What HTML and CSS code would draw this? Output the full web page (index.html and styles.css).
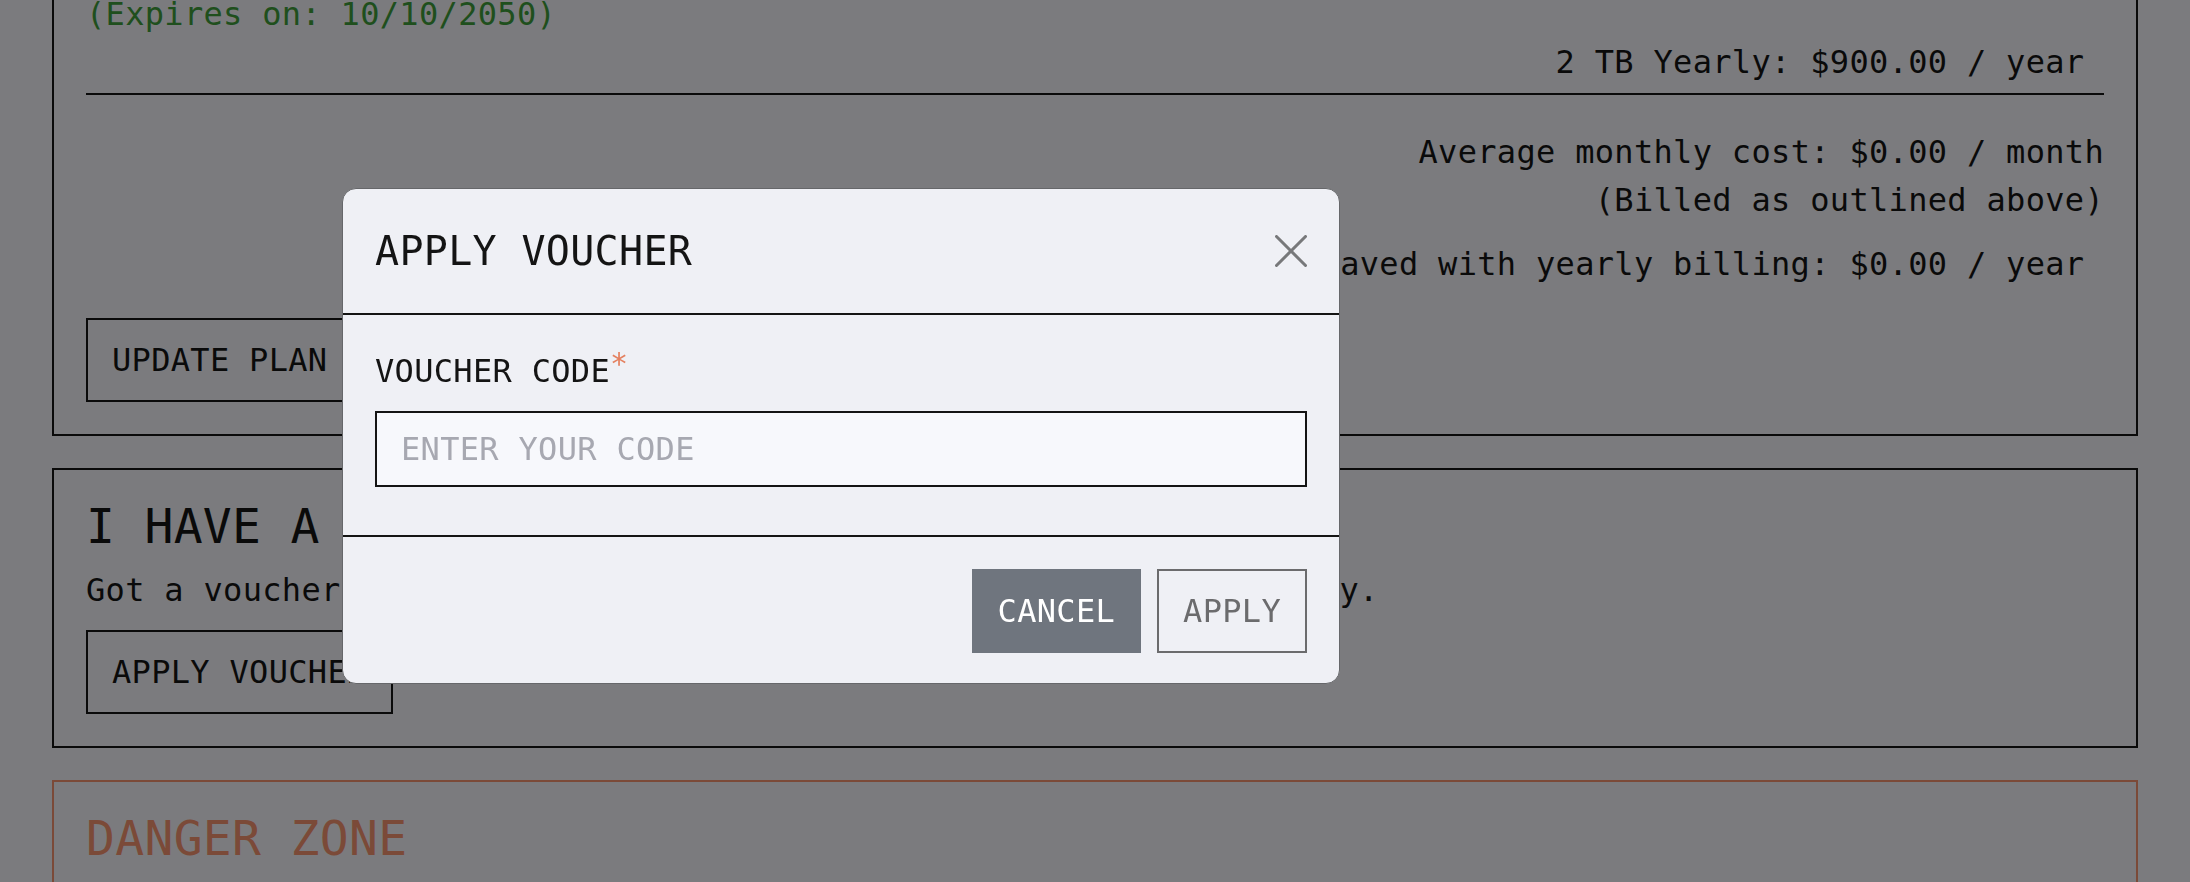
FILE: index.html
```html
<!DOCTYPE html>
<html>
<head>
  <meta charset="utf-8">
  <title>Billing</title>
  <link rel="stylesheet" href="styles.css">
</head>
<body>
 <main class="page">

  <!-- current plan -->
  <section class="card">
   <h2 class="card-title">CURRENT PLAN</h2>
   <ul class="line-items">
    <li class="line-item">
     <div class="item-label">
      <span>VOUCHER: FOREVER2050</span>
      <span class="expires">(Expires on: 10/10/2050)</span>
     </div>
     <span class="item-price">-$900.00 / year&nbsp;</span>
    </li>
    <li class="line-item">
     <span></span>
     <span class="item-price">2 TB Yearly: $900.00 / year&nbsp;</span>
    </li>
   </ul>
   <hr class="rule">
   <div class="totals">
    <p>Average monthly cost: $0.00 / month<br>(Billed as outlined above)</p>
    <p>Amount saved with yearly billing: $0.00 / year&nbsp;</p>
   </div>
   <button class="btn">UPDATE PLAN</button>
  </section>

  <!-- vouchers -->
  <section class="card">
   <h2 class="card-title">I HAVE A VOUCHER</h2>
   <p class="card-text">Got a voucher? Apply it here and your plan is updated immediately.</p>
   <button class="btn">APPLY VOUCHER</button>
  </section>

  <!-- danger zone -->
  <section class="card card-danger">
   <h2 class="card-title">DANGER ZONE</h2>
   <p class="card-text">Deleting your account removes all of your files. This cannot be undone.</p>
   <button class="btn btn-danger">DELETE ACCOUNT</button>
  </section>
 </main>

 <div class="backdrop">
  <div class="modal" role="dialog" aria-labelledby="voucher-title">
   <header class="modal-header">
    <h3 class="modal-title" id="voucher-title">APPLY VOUCHER</h3>
    <button class="modal-close" aria-label="Close">
     <svg width="32" height="32" viewBox="0 0 32 32">
      <path d="M1.5 1.5 L30.5 30.5 M30.5 1.5 L1.5 30.5" stroke="#77787a" stroke-width="3" stroke-linecap="round" fill="none"/>
     </svg>
    </button>
   </header>
   <div class="modal-body">
    <label class="field-label" for="voucher-code">VOUCHER CODE<span class="required">*</span></label>
    <input id="voucher-code" class="field-input" placeholder="ENTER YOUR CODE">
   </div>
   <footer class="modal-footer">
    <button class="btn btn-cancel">CANCEL</button>
    <button class="btn btn-apply">APPLY</button>
   </footer>
  </div>
 </div>
</body>
</html>
```

FILE: styles.css
```css
body {
  margin: 0;
  color: #141414;
  background-color: #eff0f5;
  font-family: "DejaVu Sans Mono", monospace;
  font-size: 32px;
  line-height: 48px;
  letter-spacing: 0.01em;
}

p {
  margin: 0;
}

/* page is scrolled down to the billing cards */
.page {
  margin: -156px 52px 0;
  padding-bottom: 64px;
}

.card {
  border: 2px solid #141414;
  padding: 32px;
  margin-bottom: 32px;
}

.card-title {
  font-size: 48px;
  line-height: 48px;
  font-weight: normal;
  margin: 0 0 16px;
}

.card-text {
  margin-bottom: 16px;
}

.line-items {
  list-style: none;
  margin: 0;
  padding: 0;
}

.line-item {
  display: flex;
  justify-content: space-between;
  align-items: flex-start;
}

.item-label {
  display: flex;
  flex-direction: column;
}

.expires {
  color: #3d9a39;
}

.rule {
  border: 0;
  border-top: 2px solid #141414;
  margin: 7px 0 33px;
}

.totals {
  text-align: right;
}

.totals p + p {
  margin-top: 16px;
}

.totals + .btn {
  margin-top: 30px;
}

.btn {
  display: block;
  font: inherit;
  letter-spacing: inherit;
  line-height: 48px;
  color: #141414;
  background-color: transparent;
  border: 2px solid #141414;
  padding: 16px 24px;
  cursor: pointer;
}

.card-danger {
  border-color: #ef906d;
}

.card-danger .card-title {
  color: #ef906d;
}

.btn-danger {
  color: #ef906d;
  border-color: #ef906d;
}

/* modal */
.backdrop {
  position: fixed;
  inset: 0;
  background-color: rgba(0, 0, 0, 0.485);
}

.modal {
  position: absolute;
  left: 342px;
  top: 188px;
  width: 998px;
  box-sizing: border-box;
  background-color: #eff0f5;
  border: 1px solid #66676a;
  border-radius: 14px;
  overflow: hidden;
}

.modal-header {
  display: flex;
  justify-content: space-between;
  align-items: center;
  padding: 32px;
  border-bottom: 2px solid #141414;
}

.modal-title {
  margin: 0;
  font-size: 40px;
  line-height: 60px;
  font-weight: normal;
}

.modal-close {
  display: flex;
  width: 32px;
  height: 32px;
  padding: 0;
  border: 0;
  background: none;
  cursor: pointer;
}

.modal-body {
  padding: 32px;
}

.field-label {
  display: block;
  margin-bottom: 16px;
}

.required {
  color: #e4805f;
  font-size: 30px;
  line-height: 1;
  vertical-align: 8px;
}

.field-input {
  display: block;
  width: 100%;
  box-sizing: border-box;
  margin-bottom: 16px;
  font: inherit;
  letter-spacing: inherit;
  line-height: 48px;
  color: #141414;
  background-color: #f7f8fc;
  border: 2px solid #141414;
  padding: 12px 24px;
  outline: none;
}

.field-input::placeholder {
  color: #a7a8b1;
}

.modal-footer {
  display: flex;
  justify-content: flex-end;
  gap: 16px;
  padding: 32px 32px 30px;
  border-top: 2px solid #141414;
}

.btn-cancel {
  color: #fff;
  background-color: #6f757e;
  border-color: #6f757e;
}

.btn-apply {
  color: #6b6b6d;
  border-color: #6b6b6d;
}
```
